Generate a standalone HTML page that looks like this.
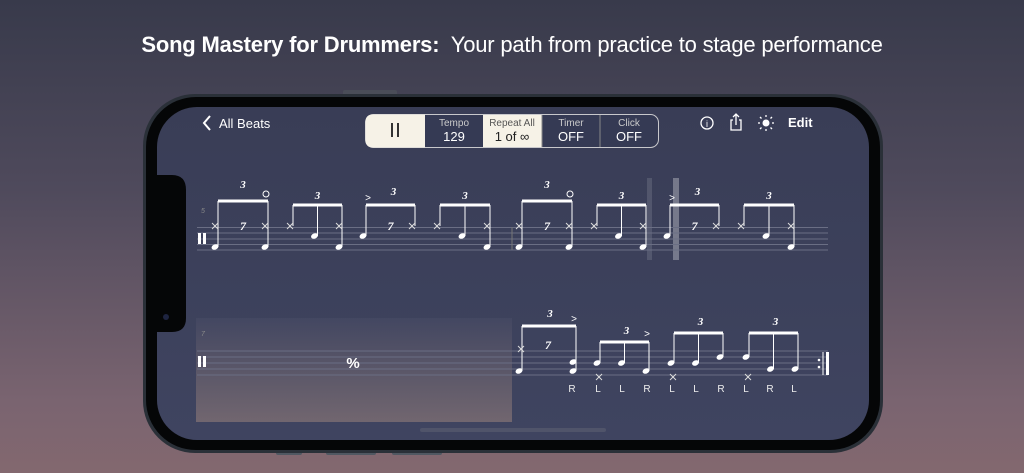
<!DOCTYPE html><html><head><meta charset="utf-8"><style>
*{margin:0;padding:0;box-sizing:border-box}
body{width:1024px;height:473px;overflow:hidden;background:linear-gradient(180deg,#383a4b 0%,#4f4a5c 40%,#7a6470 85%,#83686f 100%);font-family:"Liberation Sans",sans-serif;position:relative}
.t{position:absolute;top:32px;left:0;width:1024px;text-align:center;color:#fff;font-size:22px;letter-spacing:-0.2px;white-space:nowrap}
.t b{font-weight:bold}
</style></head><body>
<div class="t"><b>Song Mastery for Drummers:</b>&nbsp; Your path from practice to stage performance</div>
<svg width="1024" height="473" style="position:absolute;left:0;top:0" xmlns="http://www.w3.org/2000/svg">
<defs>
<linearGradient id="gb" x1="0" y1="0" x2="0" y2="1"><stop offset="0" stop-color="#444862"/><stop offset="1" stop-color="#7a6c72"/></linearGradient>
<linearGradient id="sc" x1="0" y1="0" x2="0" y2="1"><stop offset="0" stop-color="#393d56"/><stop offset="1" stop-color="#3f4460"/></linearGradient>
</defs>
<rect x="343" y="90" width="54" height="6" rx="2" fill="#4a4d58"/>
<rect x="276" y="450" width="26" height="5" rx="2" fill="#505862"/>
<rect x="326" y="450" width="50" height="5" rx="2" fill="#505862"/>
<rect x="392" y="450" width="50" height="5" rx="2" fill="#505862"/>
<rect x="143" y="94" width="740" height="359" rx="52" fill="#2a3038"/>
<rect x="146" y="97" width="734" height="353" rx="50" fill="#050607"/>
<rect x="157" y="107" width="712" height="333" rx="40" fill="url(#sc)"/>
<path d="M157 175 L172 175 Q186 175 186 190 L186 318 Q186 332 172 332 L157 332 Z" fill="#050607"/>
<circle cx="166" cy="317" r="3" fill="#1e2440"/>
<rect x="420" y="428" width="186" height="4" rx="2" fill="#50546a"/>
<path d="M210 116 L204 123 L210 130" stroke="#fff" stroke-width="2" fill="none"/>
<text x="219" y="128" fill="#fff" font-size="13">All Beats</text>
<rect x="365.5" y="114.5" width="293" height="33" rx="8" fill="#353a54" stroke="#c8c8cc"/>
<path d="M373 114.5 H425 V147.5 H373 Q365.5 147.5 365.5 140 V122 Q365.5 114.5 373 114.5Z" fill="#f6f2e7"/>
<rect x="483" y="115" width="59" height="32" fill="#f6f2e7"/>
<line x1="542" y1="115" x2="542" y2="147" stroke="#888"/><line x1="600" y1="115" x2="600" y2="147" stroke="#888"/>
<rect x="391" y="123" width="2" height="14" fill="#333"/><rect x="397" y="123" width="2" height="14" fill="#333"/>
<g text-anchor="middle" font-size="10"><text x="454" y="126" fill="#ccc">Tempo</text><text x="512" y="126" fill="#555">Repeat All</text><text x="571" y="126" fill="#ccc">Timer</text><text x="629" y="126" fill="#ccc">Click</text></g>
<g text-anchor="middle" font-size="13"><text x="454" y="141" fill="#fff">129</text><text x="512" y="141" fill="#222">1 of ∞</text><text x="571" y="141" fill="#fff">OFF</text><text x="629" y="141" fill="#fff">OFF</text></g>
<circle cx="707" cy="123" r="6" stroke="#fff" stroke-width="1.3" fill="none"/><text x="707" y="127" fill="#fff" font-size="9" text-anchor="middle">i</text>
<path d="M733 120 H731 V130 H741 V120 H739 M736 125 V114 M733 117 L736 114 L739 117" stroke="#fff" stroke-width="1.3" fill="none"/>
<circle cx="766" cy="123" r="3.5" fill="#fff"/>
<g stroke="#fff" stroke-width="1.3"><line x1="766" y1="115" x2="766" y2="117"/><line x1="766" y1="129" x2="766" y2="131"/><line x1="758" y1="123" x2="760" y2="123"/><line x1="772" y1="123" x2="774" y2="123"/><line x1="760" y1="117" x2="761.5" y2="118.5"/><line x1="770.5" y1="127.5" x2="772" y2="129"/><line x1="760" y1="129" x2="761.5" y2="127.5"/><line x1="770.5" y1="118.5" x2="772" y2="117"/></g>
<text x="788" y="127" fill="#fff" font-size="13" font-weight="bold">Edit</text>
<rect x="647" y="178" width="5" height="82" fill="#fff" opacity="0.12"/>
<rect x="673" y="178" width="6" height="82" fill="#fff" opacity="0.3"/>
<rect x="196" y="318" width="316" height="104" fill="url(#gb)" opacity="0.85"/>
<g id="notes"></g>
<text x="201" y="213" fill="#888" font-size="7" font-style="italic">5</text>
<text x="201" y="336" fill="#888" font-size="7" font-style="italic">7</text>
<rect x="198" y="233" width="3" height="11" fill="#fff"/><rect x="203" y="233" width="3" height="11" fill="#fff"/>
<rect x="198" y="356" width="3" height="11" fill="#fff"/><rect x="203" y="356" width="3" height="11" fill="#fff"/>
<text x="353" y="368" fill="#fff" font-size="15" text-anchor="middle" font-weight="bold">%</text>
<rect x="826" y="352" width="3" height="23" fill="#fff"/><line x1="823" y1="352" x2="823" y2="375" stroke="#fff"/>
<circle cx="819" cy="360" r="1.3" fill="#fff"/><circle cx="819" cy="367" r="1.3" fill="#fff"/>
</svg>
<script>
var g=document.getElementById('notes'),s='';
function L(x1,y1,x2,y2,w,c){s+='<line x1="'+x1+'" y1="'+y1+'" x2="'+x2+'" y2="'+y2+'" stroke="'+(c||'#fff')+'" stroke-width="'+(w||1)+'"/>';}
function N(x,y){s+='<ellipse cx="'+(x-3)+'" cy="'+y+'" rx="3.6" ry="2.6" transform="rotate(-25 '+(x-3)+' '+y+')" fill="#fff"/>';}
function X(x,y){L(x-3,y-3,x+3,y+3,1,'#ddd');L(x-3,y+3,x+3,y-3,1,'#ddd');}
function T(x,y,t,sz){s+='<text x="'+x+'" y="'+y+'" fill="#fff" font-size="'+(sz||11)+'" font-family="Liberation Serif" font-style="italic" font-weight="bold" text-anchor="middle">'+t+'</text>';}
function tx(x,y,t,sz,c){s+='<text x="'+x+'" y="'+y+'" fill="'+(c||'#fff')+'" font-size="'+(sz||10)+'" text-anchor="middle">'+t+'</text>';}
[227.5,233,239,244.5,250].forEach(function(y){L(197,y,828,y,1,'#6a6e84');});
[351,357,363,369,375].forEach(function(y){L(197,y,828,y,1,'#6a6e84');});
L(512,227,512,250,1,'#777');
function A(a,b,by,o){L(a,by,b,by,3);L(a,by,a,247);L(b,by,b,247);N(a,247);N(b,247);X(a-3,226);X(b-3,226);T((a+b)/2,by-13,'3');T((a+b)/2,230,'7',12);if(o)s+='<circle cx="'+(b-2)+'" cy="'+(by-7)+'" r="3" stroke="#fff" fill="none"/>';}
function B(a,b,by){var m=(a+b)/2;L(a,by,b,by,3);L(a,by,a,226);L(m,by,m,236);L(b,by,b,247);X(a-3,226);N(m,236);N(b,247);X(b-3,226);T(m,by-6,'3');}
function C(a,b,by){L(a,by,b,by,3);L(a,by,a,236);L(b,by,b,226);N(a,236);X(b-3,226);T((a+b)/2,230,'7',12);T((a+b)/2+3,by-10,'3');tx(a+2,by-4,'&gt;',10);}
function g1(o){A(218+o,268+o,201,1);B(293+o,342+o,205);C(366+o,415+o,205);B(440+o,490+o,205);}
g1(0);g1(304);
L(522,326,576,326,3);L(522,326,522,371);L(576,326,576,371);N(522,371);N(576,362);N(576,371);X(521,349);T(548,349,'7',12);T(550,317,'3');tx(574,322,'&gt;');
function R(a,by,ys,xs,acc){var b=a+49,m=a+24.5;L(a,by,b,by,3);[a,m,b].forEach(function(x,i){L(x,by,x,ys[i]);N(x,ys[i]);});if(xs)X(a-1,377);T(m+2,by-8,'3');if(acc)tx(b-2,by-5,'&gt;');}
R(600,342,[363,363,371],1,1);R(674,333,[363,363,357],1,0);R(749,333,[357,369,369],1,0);
var st=[[572,'R'],[598,'L'],[622,'L'],[647,'R'],[672,'L'],[696,'L'],[721,'R'],[746,'L'],[770,'R'],[794,'L']];
st.forEach(function(p){tx(p[0],392,p[1],10,'#eee');});
g.innerHTML=s;
</script>
</body></html>
